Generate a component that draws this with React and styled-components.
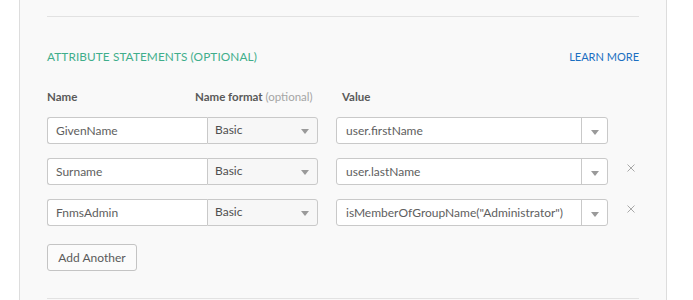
import React from "react";
import styled, { createGlobalStyle } from "styled-components";

const Global = createGlobalStyle`
  html, body { margin: 0; padding: 0; background: #ffffff; }
  body { font-family: "Lato", "Open Sans", Arial, sans-serif; }
  * { box-sizing: border-box; }
`;

const Panel = styled.div`
  margin-left: 19px;
  width: 648px;
  min-height: 320px;
  background: #f9f9f9;
  border-left: 1px solid #dddddd;
  border-right: 1px solid #dddddd;
  padding: 16px 27px 0 27px;
`;

const Divider = styled.div`
  height: 1px;
  background: #e2e2e2;
  margin-top: ${(p) => p.$top || 0}px;
`;

const SectionHeader = styled.div`
  display: flex;
  justify-content: space-between;
  align-items: center;
  margin-top: 32px;
  height: 14px;
`;

const Title = styled.h3`
  margin: 0;
  font-size: 11.8px;
  font-weight: 400;
  color: #3fae8b;
  letter-spacing: 0.1px;
`;

const LearnMore = styled.a`
  font-size: 11px;
  font-weight: 400;
  color: #1b6fc1;
  text-decoration: none;
`;

const Grid = styled.div`
  display: grid;
  grid-template-columns: 160px 111px 290px 1fr;
  column-gap: 0;
`;

const LabelRow = styled(Grid)`
  margin-top: 27px;
  height: 14px;
  align-items: end;
`;

const Label = styled.div`
  font-size: 11.5px;
  font-weight: 700;
  color: #5a5a5a;
  line-height: 14px;
  white-space: nowrap;
  padding-left: ${(p) => p.$indent || 0}px;
  margin-left: ${(p) => p.$shift || 0}px;
`;

const Optional = styled.span`
  font-weight: 400;
  color: #a5a5a5;
`;

const Rows = styled.div`
  display: flex;
  flex-direction: column;
  gap: 14px;
  margin-top: 13px;
`;

const Row = styled(Grid)`
  height: 27px;
  align-items: stretch;
`;

const TextInput = styled.div`
  height: 27px;
  background: #ffffff;
  border: 1px solid #c9c9c9;
  border-right: none;
  border-radius: 3px 0 0 3px;
  padding: 0 8px;
  display: flex;
  align-items: center;
  font-size: 12px;
  color: #5e5e5e;
`;

const Select = styled.div`
  height: 27px;
  background: #f7f7f7;
  border: 1px solid #c9c9c9;
  border-radius: 0 3px 3px 0;
  padding: 0 8px 2px 7px;
  display: flex;
  align-items: center;
  justify-content: space-between;
  font-size: 12px;
  color: #4f4f4f;
`;

const Arrow = styled.span`
  width: 0;
  height: 0;
  border-left: 4px solid transparent;
  border-right: 4px solid transparent;
  border-top: 5px solid #9a9a9a;
  margin-top: 3px;
`;

const Combo = styled.div`
  margin-left: 18px;
  height: 27px;
  display: flex;
  background: #ffffff;
  border: 1px solid #c9c9c9;
  border-radius: 3px;
`;

const ComboText = styled.div`
  flex: 1;
  padding: 0 9px;
  display: flex;
  align-items: center;
  font-size: 12px;
  color: #5e5e5e;
  white-space: nowrap;
`;

const ComboButton = styled.div`
  width: 26px;
  border-left: 1px solid #c9c9c9;
  display: flex;
  align-items: center;
  justify-content: center;
`;

const RemoveCell = styled.div`
  display: flex;
  align-items: flex-start;
  padding-left: 19px;
  padding-top: 6px;
`;

const RemoveIcon = styled.svg`
  width: 8px;
  height: 8px;
  display: block;
`;

const AddButton = styled.button`
  margin-top: 18px;
  height: 27px;
  width: 90px;
  background: #fbfbfb;
  border: 1px solid #c4c4c4;
  border-radius: 3px;
  font-family: inherit;
  font-size: 12px;
  color: #5a5a5a;
  padding: 0;
`;

const rows = [
  { name: "GivenName", format: "Basic", value: "user.firstName", removable: false },
  { name: "Surname", format: "Basic", value: "user.lastName", removable: true },
  { name: "FnmsAdmin", format: "Basic", value: 'isMemberOfGroupName("Administrator")', removable: true },
];

export default function App() {
  return (
    <>
      <Global />
      <Panel>
        <Divider />
        <SectionHeader>
          <Title>ATTRIBUTE STATEMENTS (OPTIONAL)</Title>
          <LearnMore href="#">LEARN MORE</LearnMore>
        </SectionHeader>
        <LabelRow>
          <Label>Name</Label>
          <Label $shift={-12}>
            Name format <Optional>(optional)</Optional>
          </Label>
          <Label $indent={24}>Value</Label>
          <div />
        </LabelRow>
        <Rows>
          {rows.map((r) => (
            <Row key={r.name}>
              <TextInput>{r.name}</TextInput>
              <Select>
                {r.format}
                <Arrow />
              </Select>
              <Combo>
                <ComboText>{r.value}</ComboText>
                <ComboButton>
                  <Arrow />
                </ComboButton>
              </Combo>
              <RemoveCell>
                {r.removable && (
                  <RemoveIcon viewBox="0 0 8 8">
                    <path d="M0.5 0.5 L7.5 7.5 M7.5 0.5 L0.5 7.5" stroke="#a8a8a8" strokeWidth="1" />
                  </RemoveIcon>
                )}
              </RemoveCell>
            </Row>
          ))}
        </Rows>
        <AddButton>Add Another</AddButton>
        <Divider $top={27} />
      </Panel>
    </>
  );
}
